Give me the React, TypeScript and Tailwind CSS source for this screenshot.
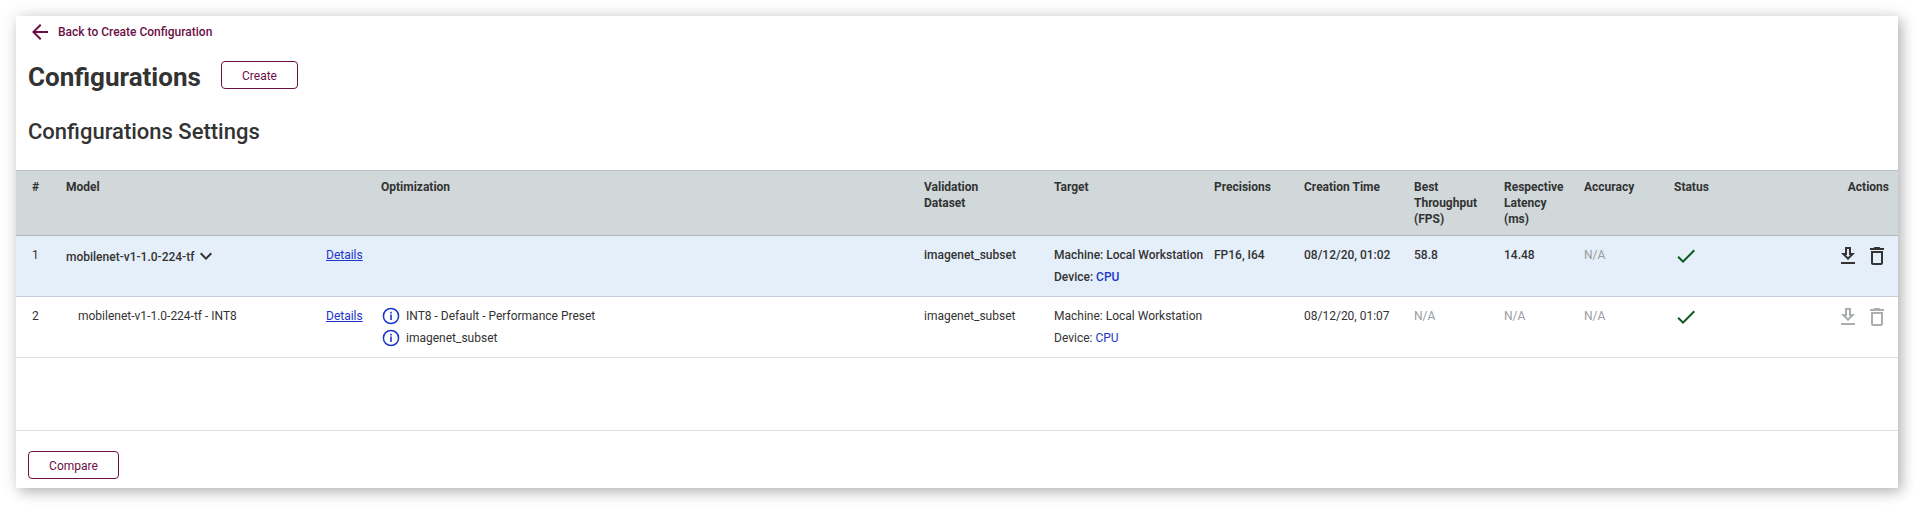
import type { ReactNode } from "react";

const PATHS = {
  back: "M20 11H7.83l5.59-5.59L12 4l-8 8 8 8 1.41-1.41L7.83 13H20z",
  chevron: "M16.59 8.59L12 13.17 7.41 8.59 6 10l6 6 6-6z",
  check: "M9 16.17L4.83 12l-1.42 1.41L9 19 21 7l-1.41-1.41z",
  download: "M19 9h-4V3H9v6H5l7 7 7-7zm-8 2V5h2v6h1.17L12 13.17 9.83 11H11zm-6 7h14v2H5z",
  trash: "M6 19c0 1.1.9 2 2 2h8c1.1 0 2-.9 2-2V7H6v12zM8 9h8v10H8V9zm7.5-5l-1-1h-5l-1 1H5v2h14V4z",
};

function Icon({ name, className = "" }: { name: keyof typeof PATHS; className?: string }) {
  return (
    <svg viewBox="0 0 24 24" className={`size-6 shrink-0 fill-current ${className}`}>
      <path d={PATHS[name]} />
    </svg>
  );
}

function InfoIcon() {
  return (
    <svg viewBox="0 0 18 18" className="size-[18px] shrink-0 text-[#1c36c9]">
      <circle cx="9" cy="9" r="7.6" fill="none" stroke="currentColor" strokeWidth="1.5" />
      <path d="M8.2 4.8h1.6v1.6H8.2zM8.2 7.6h1.6v5.4H8.2z" fill="currentColor" />
    </svg>
  );
}

const GRID =
  "grid grid-cols-[34px_260px_55px_543px_130px_160px_90px_110px_90px_80px_90px_1fr] pl-4 pr-[9px]";

function OutlineButton({ children, className }: { children: ReactNode; className: string }) {
  return (
    <button
      className={`flex h-7 items-center justify-center rounded border border-[#6b0f45] pt-0.5 text-[#6b0f45] ${className}`}
    >
      {children}
    </button>
  );
}

type RowData = {
  id: number;
  model: string;
  optimization: string[];
  precisions: string;
  time: string;
  throughput: string;
  latency: string;
  selected: boolean;
};

const ROWS: RowData[] = [
  {
    id: 1,
    model: "mobilenet-v1-1.0-224-tf",
    optimization: [],
    precisions: "FP16, I64",
    time: "08/12/20, 01:02",
    throughput: "58.8",
    latency: "14.48",
    selected: true,
  },
  {
    id: 2,
    model: "mobilenet-v1-1.0-224-tf - INT8",
    optimization: ["INT8 - Default - Performance Preset", "imagenet_subset"],
    precisions: "",
    time: "08/12/20, 01:07",
    throughput: "N/A",
    latency: "N/A",
    selected: false,
  },
];

function Value({ text }: { text: string }) {
  return <div className={text === "N/A" ? "font-normal text-[#999c9f]" : ""}>{text}</div>;
}

function Row({ row }: { row: RowData }) {
  return (
    <div
      className={`${GRID} h-[61px] border-b pt-2 leading-[22px] ${
        row.selected ? "border-[#c3ced9] bg-[#e5effa] font-medium" : "border-[#dcdfdf]"
      }`}
    >
      <div className="font-normal">{row.id}</div>
      {row.selected ? (
        <div className="flex h-6 items-center pt-px">
          {row.model}
          <Icon name="chevron" className="-mt-px" />
        </div>
      ) : (
        <div className="pl-3">{row.model}</div>
      )}
      <div className="font-normal">
        <a className="text-[#1c36c9] underline">Details</a>
      </div>
      <div>
        {row.optimization.map((item) => (
          <div key={item} className="flex items-center gap-[6px] pl-px">
            <InfoIcon />
            {item}
          </div>
        ))}
      </div>
      <div>imagenet_subset</div>
      <div className="whitespace-nowrap">
        <div>Machine: Local Workstation</div>
        <div>
          Device: <span className="text-[#1c36c9]">CPU</span>
        </div>
      </div>
      <div>{row.precisions}</div>
      <div>{row.time}</div>
      <Value text={row.throughput} />
      <Value text={row.latency} />
      <Value text="N/A" />
      <div className="flex justify-between">
        <Icon name="check" className="text-[#0b5a1e]" />
        <div className={`flex gap-[5px] ${row.selected ? "text-[#333]" : "text-[#aaaeae]"}`}>
          <Icon name="download" />
          <Icon name="trash" />
        </div>
      </div>
    </div>
  );
}

export default function App() {
  return (
    <div className="h-[512px] bg-white pl-4 pt-4 font-['Roboto',sans-serif] text-[12px] text-[#333]">
      <main className="flex h-[472px] w-[1882px] flex-col bg-white shadow-[0_0_20px_rgba(0,0,0,0.1),4px_4px_12px_rgba(0,0,0,0.24)]">
        <a className="mt-1 flex h-6 items-center gap-[6px] pl-3 text-[#6b0f45]">
          <Icon name="back" />
          <span className="font-medium">Back to Create Configuration</span>
        </a>
        <div className="mt-[17px] flex h-7 pl-3">
          <h1 className="w-[193px] text-[26px] font-bold leading-[32px]">Configurations</h1>
          <OutlineButton className="w-[77px]">Create</OutlineButton>
        </div>
        <h2 className="mt-[29px] pl-3 text-[22px] font-medium leading-[28px]">
          Configurations Settings
        </h2>
        <div
          className={`${GRID} mt-6 h-[66px] border-y border-t-[#b9c1c2] border-b-[#b0b8bc] bg-[#d0d8d9] pt-2 font-bold leading-4`}
        >
          <div>#</div>
          <div>Model</div>
          <div />
          <div>Optimization</div>
          <div>
            Validation
            <br />
            Dataset
          </div>
          <div>Target</div>
          <div>Precisions</div>
          <div>Creation Time</div>
          <div>
            Best
            <br />
            Throughput
            <br />
            (FPS)
          </div>
          <div>
            Respective
            <br />
            Latency
            <br />
            (ms)
          </div>
          <div>Accuracy</div>
          <div className="flex justify-between">
            <span>Status</span>
            <span>Actions</span>
          </div>
        </div>
        {ROWS.map((row) => (
          <Row key={row.id} row={row} />
        ))}
        <div className="grow border-b border-[#dcdfdf]" />
        <div className="h-[57px] pl-3 pt-5">
          <OutlineButton className="w-[91px]">Compare</OutlineButton>
        </div>
      </main>
    </div>
  );
}
